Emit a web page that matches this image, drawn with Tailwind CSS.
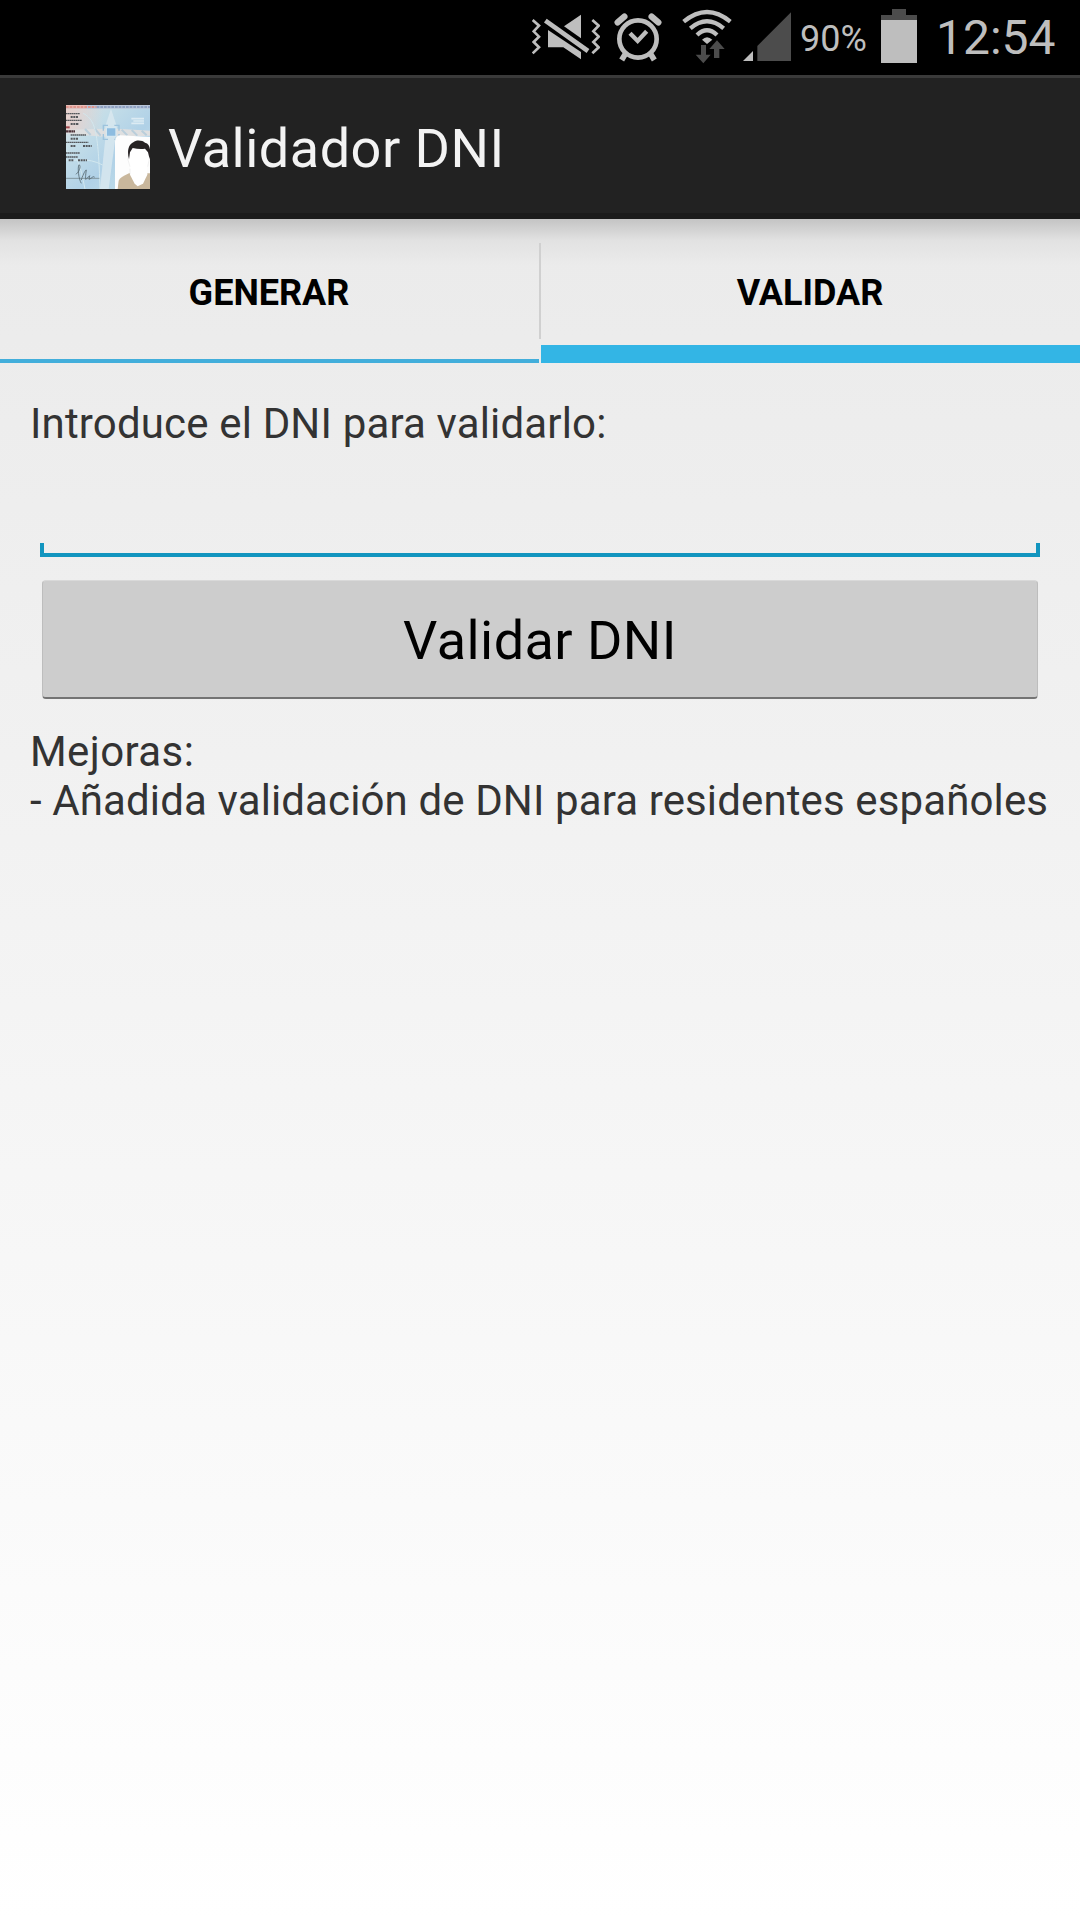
<!DOCTYPE html>
<html lang="es">
<head>
  <meta charset="UTF-8" />
  <meta name="viewport" content="width=device-width, initial-scale=1.0"/>
  <title>Validador DNI</title>
  <script src="https://cdn.jsdelivr.net/npm/@tailwindcss/browser@4"></script>
</head>
<body class="font-['Roboto',sans-serif]">
  <div class="w-[1080px] h-[1920px] flex flex-col overflow-hidden bg-linear-to-b from-[#e8e8e8] to-white">

    <!-- Status bar -->
    <div class="h-[75px] shrink-0 bg-black flex items-center pl-[532px] text-[#bebebe]">
      <svg class="w-[68px] h-[75px] shrink-0" viewBox="36 0 204 225" fill="#bebebe">
        <path d="M183 44V115L132 79Z"/>
        <path d="M84 90L183 156V178L130 142H84Z"/>
        <path d="M76 62L204 153" fill="none" stroke="#bebebe" stroke-width="14"/>
        <path d="M38 60L57 77L41 94L57 110L41 126L57 142L38 160M217 60L236 77L220 94L236 110L220 126L236 142L217 160" fill="none" stroke="#bebebe" stroke-width="8"/>
      </svg>
      <svg class="ml-[14px] w-[48px] h-[75px] shrink-0" viewBox="282 0 144 225" fill="none" stroke="#bebebe">
        <circle cx="354" cy="117" r="56" stroke-width="14"/>
        <path d="M330 100L353 123L380 94" stroke-width="13"/>
        <path d="M293 67L313 50M395 50L415 67" stroke-width="19" stroke-linecap="round"/>
        <path d="M317 160L305 180M391 160L403 180" stroke-width="17"/>
      </svg>
      <svg class="ml-[20px] w-[50px] h-[75px] shrink-0" viewBox="486 0 150 225">
        <g fill="none" stroke="#bebebe" stroke-width="13">
          <path d="M491 65Q561 7 631 65"/>
          <path d="M511 85Q561 43 611 85"/>
          <path d="M531 105Q561 77 591 105"/>
        </g>
        <path d="M546 119Q561 104 577 119L561 132Z" fill="#bebebe"/>
        <path d="M543 135H558V164H572L550 190L527 164H543ZM591 121L614 147H598V174H582V147H568Z" fill="#4c4c4c"/>
      </svg>
      <svg class="ml-[11px] w-[48px] h-[75px] shrink-0" viewBox="669 0 144 225">
        <path d="M669 183L699 153V183Z" fill="#bebebe"/>
        <path d="M712 183V138L813 37V183Z" fill="#4c4c4c"/>
      </svg>
      <span class="ml-[9px] w-[81px] mt-[3px] text-[36px] leading-none">90%</span>
      <svg class="w-[36px] h-[75px] shrink-0" viewBox="0 0 36 75">
        <path d="M11 9H25V15H36V20H0V15H11Z" fill="#4c4c4c"/>
        <path d="M0 20H36V63H0Z" fill="#bebebe"/>
      </svg>
      <span class="ml-[19px] text-[48px] leading-none">12:54</span>
    </div>

    <!-- Action bar -->
    <div class="h-[144px] shrink-0 bg-[#222222] border-t-3 border-t-[#3a3a3a] border-b-6 border-b-[#1b1b1b] flex items-center pt-[3px] pl-[66px]">
      <svg class="w-[84px] h-[84px] shrink-0" viewBox="48 45 252 252">
        <defs>
          <linearGradient id="card" x1="0" y1="0" x2="1" y2="1">
            <stop offset="0" stop-color="#dbdfe0"/>
            <stop offset=".3" stop-color="#c3dde8"/>
            <stop offset=".6" stop-color="#b0d1e7"/>
            <stop offset="1" stop-color="#c9e3e9"/>
          </linearGradient>
          <linearGradient id="pink" x1="0" y1="0" x2="1" y2="0">
            <stop offset="0" stop-color="#e6d0cc"/>
            <stop offset="1" stop-color="#e6d0cc" stop-opacity="0"/>
          </linearGradient>
        </defs>
        <path d="M48 45H300V297H48Z" fill="url(#card)"/>
        <path d="M48 45H160V120H48Z" fill="url(#pink)"/>
        <path d="M48 45H300V56H48Z" fill="#b9c5d8"/>
        <path d="M48 45H110V56H48Z" fill="#e9bdb6"/>
        <path d="M48 51H140" stroke="#df958d" stroke-width="6" stroke-dasharray="8 3"/>
        <path d="M140 51H300" stroke="#8fa2c2" stroke-width="6" stroke-dasharray="8 3"/>
        <path d="M183 56L200 108L196 145L176 297H150L166 145V108Z" fill="#dceaf0" opacity=".75"/>
        <path d="M48 119L162 116L204 116L300 122V137L204 140L162 140L48 131Z" fill="#dedfe0"/>
        <path d="M105 117L122 135M135 117L152 137M215 119L232 136M245 120L262 137M275 122L290 136" stroke="#b9cedb" stroke-width="6"/>
        <path d="M169 113H198V139H169Z" fill="#8dbce0" stroke="#d5e7f0" stroke-width="4"/>
        <path d="M160 122V106H174M193 106H207V122M207 132V148H193M174 148H160V132" fill="none" stroke="#9dc3dd" stroke-width="4"/>
        <path d="M244 86H282M250 93H282M244 100H282" stroke="#dcebf3" stroke-width="5"/>
        <path d="M48 182C85 195 90 225 105 297M48 210C80 215 110 200 158 225M100 70C135 90 145 120 150 297" fill="none" stroke="#d3e8ef" stroke-width="3"/>
        <g fill="none" stroke="#55585c" stroke-width="6">
          <path d="M48 71H90M48 91H96" stroke-width="4" stroke-dasharray="5 1"/>
          <path d="M62 81H85M62 102H87M62 146H84M62 168H76M99 168H125M56 211H70M84 211H111" stroke-dasharray="6 2"/>
          <path d="M48 124H75" stroke="#4c3036" stroke-width="7" stroke-dasharray="7 1"/>
          <path d="M48 112H59" stroke="#a0484e"/>
          <path d="M62 135H108M48 157H115M48 189H90M48 201H84" stroke-width="4" stroke-dasharray="5 1"/>
        </g>
        <path d="M48 265H148" stroke="#83979f" stroke-width="3"/>
        <path d="M78 253C92 240 92 226 87 224C82 232 86 268 94 280M94 270C100 250 108 238 109 240C106 258 106 270 108 268L119 257L117 268C124 266 130 256 134 262" fill="none" stroke="#566770" stroke-width="2.5"/>
        <path d="M195 297V154Q196 137 211 136L300 141V297Z" fill="#fdfdfd"/>
        <path d="M203 297L206 272Q210 262 237 250L300 250V297Z" fill="#c9b79c"/>
        <path d="M240 228V254L254 281L263 289L279 281L292 254V227Z" fill="#fff"/>
        <path d="M236 180Q229 206 239 228Q249 240 265 241Q283 240 293 226Q302 204 298 178Z" fill="#fff"/>
        <path d="M237 208C231 187 234 164 250 157C258 149 278 151 285 158C302 161 302 184 299 208L294 187L285 176Q267 178 248 174L240 187Z" fill="#262223"/>
        <path d="M233 206L240 230M298 206L293 230M240 236V253" fill="none" stroke="#d3d3d3" stroke-width="1"/>
      </svg>
      <h1 class="ml-[18px] mt-[4px] text-[54px] leading-none tracking-[0.5px] text-[#f3f3f3]">Validador DNI</h1>
    </div>

    <!-- Tabs -->
    <div class="h-[144px] shrink-0 flex text-[36px] leading-none font-bold text-black bg-linear-to-b from-[#c4c4c4] via-[#e2e2e2] via-15% to-transparent to-32%">
      <div class="w-[539px] border-b-4 border-[#42aedb] flex items-center justify-center pt-[8px] pr-[1px]">GENERAR</div>
      <div class="w-[2px] h-[96px] mt-[24px] bg-[#d0d0d0]"></div>
      <div class="w-[539px] border-b-18 border-[#33b5e5] flex items-center justify-center pt-[22px] pr-[1px]">VALIDAR</div>
    </div>

    <div class="px-[30px] text-[42px] leading-[49px] text-[#333333]">
      <p class="mt-[36px] tracking-[0.16px]">Introduce el DNI para validarlo:</p>
      <div class="mx-[10px] h-[109px] flex flex-col justify-end">
        <div class="h-[14px] border-x-4 border-b-4 border-[#1295bf]"></div>
      </div>
      <button class="mt-[23px] mx-[12px] pt-[3px] w-[996px] h-[119px] block rounded-[4px] bg-[#cdcdcd] border border-[#bdbdbd] border-t-[#d9d9d9] border-b-2 border-b-[#747474] text-[54px] tracking-[0.45px] text-black">Validar DNI</button>
      <p class="mt-[28px] tracking-[0.4px]">Mejoras:</p>
      <p class="whitespace-nowrap tracking-[0.12px]">- Añadida validación de DNI para residentes españoles</p>
    </div>
  </div>
</body>
</html>
